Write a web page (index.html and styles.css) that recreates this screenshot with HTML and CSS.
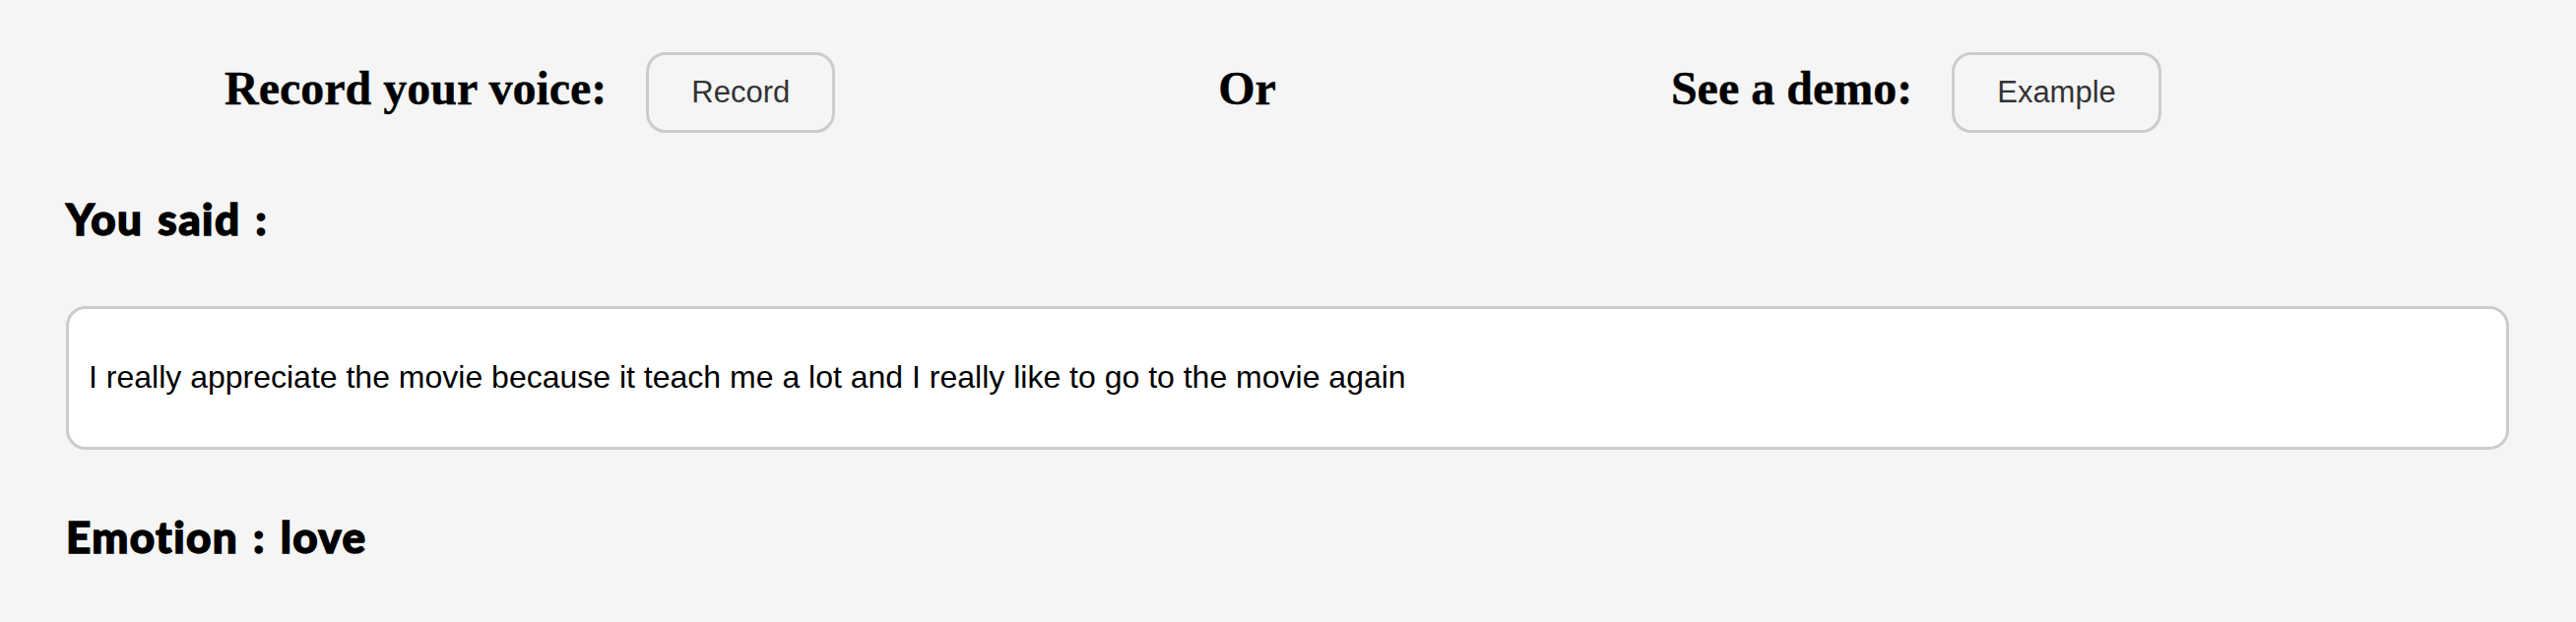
FILE: index.html
```html
<!DOCTYPE html>
<html lang="en">
<head>
<meta charset="utf-8">
<title>Emotion from voice</title>
<link rel="stylesheet" href="styles.css">
</head>
<body>
<div class="page">
  <div class="top-row">
    <div class="group">
      <span class="label">Record your voice:</span>
      <button class="btn btn-record">Record</button>
    </div>
    <span class="label or">Or</span>
    <div class="group demo">
      <span class="label">See a demo:</span>
      <button class="btn">Example</button>
    </div>
  </div>
  <h2 class="heading said">You said :</h2>
  <div class="transcript">I really appreciate the movie because it teach me a lot and I really like to go to the movie again</div>
  <h2 class="heading emotion">Emotion : love</h2>
</div>
</body>
</html>
```

FILE: styles.css
```css
html, body {
  margin: 0;
  padding: 0;
  background: #f5f5f5;
}

.page {
  padding: 53px 68px 0 67px;
}

.top-row {
  display: flex;
  align-items: center;
  padding-left: 161px;
}

.group {
  display: flex;
  align-items: center;
  gap: 40px;
}

.label {
  font-family: "Liberation Serif", "Times New Roman", serif;
  font-weight: 700;
  font-size: 48px;
  color: #000;
  padding-bottom: 10px;
  -webkit-text-stroke: 0.4px #000;
}

.or {
  margin-left: 389px;
}

.demo {
  margin-left: 401px;
}

.btn {
  font-family: "Liberation Sans", Arial, sans-serif;
  font-size: 31px;
  color: #333;
  background: #f5f5f5;
  border: 3px solid #cccccc;
  border-radius: 20px;
  padding: 20px 43px;
  line-height: 36px;
  margin: 0;
}

.heading {
  font-family: Lato, "Noto Sans", sans-serif;
  font-weight: 900;
  font-size: 44px;
  line-height: 53px;
  letter-spacing: 1.4px;
  word-spacing: 3px;
  -webkit-text-stroke: 1.4px #000;
  margin: 0;
  color: #000;
}

.said {
  margin-top: 61px;
}

.transcript {
  margin-top: 62px;
  background: #fff;
  border: 3px solid #cccccc;
  border-radius: 20px;
  padding: 51px 20px 52px;
  font-family: "Liberation Sans", Arial, sans-serif;
  font-size: 32px;
  line-height: 37px;
  color: #000;
}

.emotion {
  margin-top: 62px;
}
```
